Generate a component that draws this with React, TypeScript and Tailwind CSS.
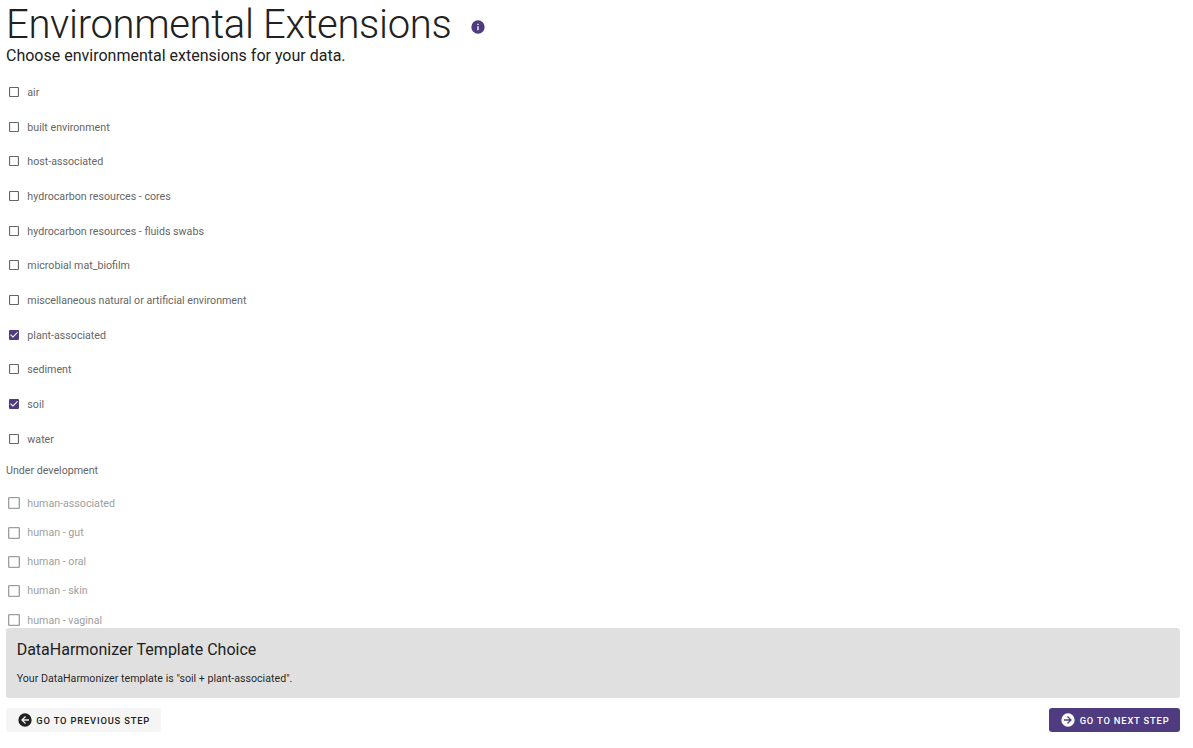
const paths = {
  blank:
    'M19,3H5C3.89,3 3,3.89 3,5V19A2,2 0 0,0 5,21H19A2,2 0 0,0 21,19V5C21,3.89 20.1,3 19,3M19,5V19H5V5H19Z',
  marked:
    'M10,17L5,12L6.41,10.58L10,14.17L17.59,6.58L19,8M19,3H5C3.89,3 3,3.89 3,5V19A2,2 0 0,0 5,21H19A2,2 0 0,0 21,19V5C21,3.89 20.1,3 19,3Z',
  info: 'M13,9H11V7H13M13,17H11V11H13M12,2A10,10 0 0,0 2,12A10,10 0 0,0 12,22A10,10 0 0,0 22,12A10,10 0 0,0 12,2Z',
  left: 'M2,12A10,10 0 0,1 12,2A10,10 0 0,1 22,12A10,10 0 0,1 12,22A10,10 0 0,1 2,12M18,11H10L13.5,7.5L12.08,6.08L6.16,12L12.08,17.92L13.5,16.5L10,13H18V11Z',
  right:
    'M22,12A10,10 0 0,1 12,22A10,10 0 0,1 2,12A10,10 0 0,1 12,2A10,10 0 0,1 22,12M6,13H14L10.5,16.5L11.92,17.92L17.84,12L11.92,6.08L10.5,7.5L14,11H6V13Z',
};

function Icon({
  name,
  className,
  box = '0 0 24 24',
}: {
  name: keyof typeof paths;
  className: string;
  box?: string;
}) {
  return (
    <svg viewBox={box} fill="currentColor" aria-hidden="true" className={`shrink-0 ${className}`}>
      <path d={paths[name]} />
    </svg>
  );
}

const boxOnly = '3 3 18 18';

const available = [
  'air',
  'built environment',
  'host-associated',
  'hydrocarbon resources - cores',
  'hydrocarbon resources - fluids swabs',
  'microbial mat_biofilm',
  'miscellaneous natural or artificial environment',
  'plant-associated',
  'sediment',
  'soil',
  'water',
];
const selected = ['soil', 'plant-associated'];
const upcoming = ['human-associated', 'human - gut', 'human - oral', 'human - skin', 'human - vaginal'];

export default function App() {
  return (
    <main className="flex h-[748px] flex-col overflow-hidden bg-white pl-[6px] pr-[13px] font-['Roboto',sans-serif] text-[#212121]">
      <header className="flex h-[46px] items-center pt-[4px]">
        <h1 className="text-[40px] font-light leading-[40px] tracking-[-0.333px]">Environmental Extensions</h1>
        <Icon name="info" className="ml-[19px] mt-[4px] size-4 text-[#4f3b80]" />
      </header>
      <p className="h-[28.67px] text-[16px] leading-[20px]">Choose environmental extensions for your data.</p>

      <div className="flex flex-col">
        {available.map((label) => {
          const on = selected.includes(label);
          return (
            <label
              key={label}
              className="flex h-[34.667px] items-center pl-[3px] text-[10.667px] leading-[14px] text-[#666666]"
            >
              <Icon
                name={on ? 'marked' : 'blank'}
                box={boxOnly}
                className={on ? 'size-[10px] text-[#4f3b80]' : 'size-[10px]'}
              />
              <span className="ml-[8.333px] mt-[2px]">{label}</span>
            </label>
          );
        })}
      </div>

      <p className="h-[39.33px] pt-[8px] text-[10.667px] leading-[14.667px] text-[#666666]">Under development</p>
      <div className="flex h-[133px] flex-col gap-[13.25px]">
        {upcoming.map((label) => (
          <label
            key={label}
            className="flex h-4 items-center pl-[2px] text-[10.667px] leading-[14px] text-[#9e9e9e]"
          >
            <Icon name="blank" box={boxOnly} className="mt-[0.2px] size-3" />
            <span className="ml-[7.333px] mt-[0.9px]">{label}</span>
          </label>
        ))}
      </div>

      <section className="h-[70px] shrink-0 rounded-[3px] bg-[#e0e0e0] px-[10.667px] pt-[11px]">
        <h2 className="text-[16px] leading-[21.333px]">DataHarmonizer Template Choice</h2>
        <p className="mt-[11.667px] text-[10.667px] leading-[14.667px] text-black/87">
          Your DataHarmonizer template is "soil + plant-associated".
        </p>
      </section>

      <nav className="mt-[10px] flex h-6 shrink-0 justify-between text-[9.333px] font-medium tracking-[0.8333px]">
        <button className="flex w-[155px] items-center rounded-[3px] bg-[#f5f5f5] pl-[10.667px]">
          <Icon name="left" className="mr-[3.667px] size-4" />
          <span className="mt-[2px]">GO TO PREVIOUS STEP</span>
        </button>
        <button className="flex w-[131px] items-center rounded-[3px] bg-[#4f3b80] pl-[10.667px] text-white">
          <Icon name="right" className="mr-[4px] size-4" />
          <span className="mt-[2px]">GO TO NEXT STEP</span>
        </button>
      </nav>
    </main>
  );
}
